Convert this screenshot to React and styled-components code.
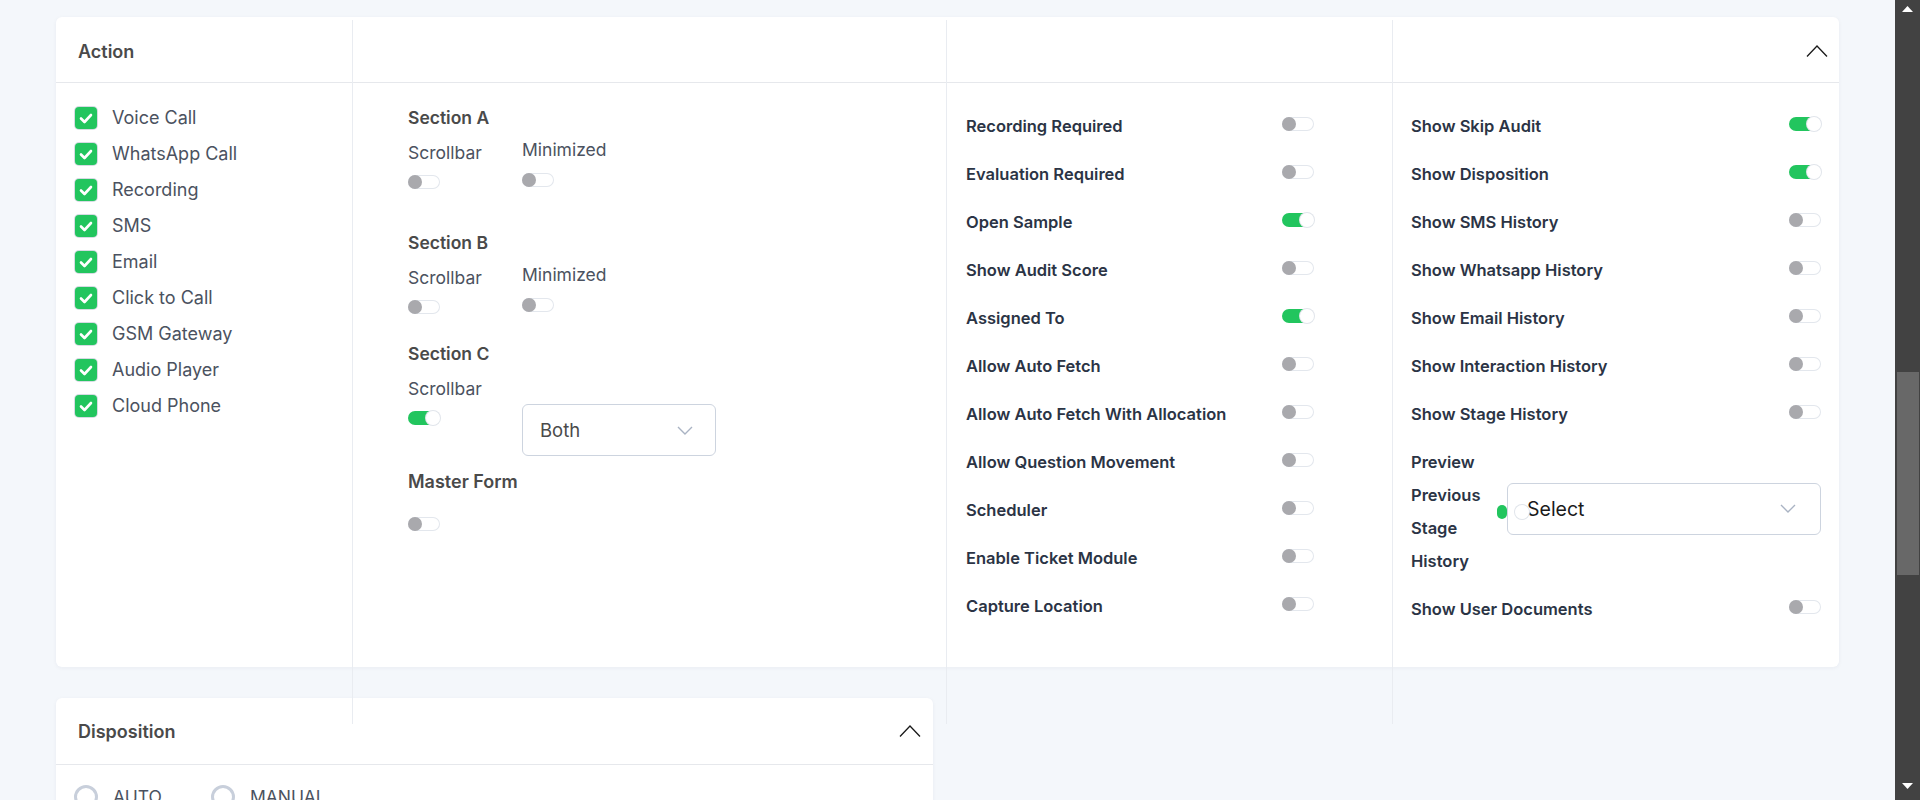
import React from "react";
import styled, { createGlobalStyle } from "styled-components";

const GlobalStyle = createGlobalStyle`
  html, body {
    margin: 0;
    padding: 0;
    background: #f4f7fb;
    font-family: Inter, "Noto Sans", Arial, sans-serif;
  }
  * {
    box-sizing: border-box;
  }
`;

const Page = styled.div`
  padding: 17px 81px 0 56px;
`;

/* browser scroll rail drawn over the right edge */
const ScrollRail = styled.div`
  position: fixed;
  top: 0;
  right: 0;
  width: 25px;
  height: 100vh;
  background: #424242;
  display: flex;
  flex-direction: column;
  justify-content: space-between;
  align-items: center;
  padding: 6px 0 11px;
`;

const ScrollThumb = styled.div`
  position: absolute;
  top: 372px;
  left: 2px;
  right: 1px;
  height: 203px;
  background: #686868;
`;

const Card = styled.section`
  background: #fff;
  border-radius: 6px;
  box-shadow: 0 1px 4px rgba(30, 45, 80, 0.05);
`;

const ActionCard = styled(Card)`
  height: 650px;
  padding-top: 3px;
  display: grid;
  grid-template-columns: 296px 594px 446px minmax(0, 1fr);
`;

const Column = styled.div`
  position: relative;
  height: 704px;
  min-width: 0;
  display: flex;
  flex-direction: column;
  border-left: ${(p) => (p.$divider ? "1px solid #e9ecf1" : "none")};
`;

const ColumnHead = styled.div`
  height: 63px;
  flex: none;
  display: flex;
  align-items: center;
  justify-content: ${(p) => (p.$end ? "flex-end" : "flex-start")};
  padding: 0 11px 0 22px;
  border-bottom: 1px solid #e6e8ec;
`;

const HeadTitle = styled.h2`
  margin: 0;
  font-size: 18px;
  font-weight: 600;
  color: #4a4a4a;
`;

const ColumnBody = styled.div`
  padding: ${(p) => p.$pad};
  display: flex;
  flex-direction: column;
`;

/* ---------- checkboxes ---------- */

const CheckList = styled.div`
  display: flex;
  flex-direction: column;
  gap: 14px;
`;

const CheckRow = styled.label`
  display: flex;
  align-items: center;
  height: 22px;
`;

const CheckBox = styled.span`
  width: 22px;
  height: 22px;
  flex: none;
  border-radius: 4px;
  background: #22c55e;
  box-shadow: 0 0 0 1px #d6dbe3;
  display: flex;
  align-items: center;
  justify-content: center;
`;

const CheckText = styled.span`
  margin-left: 15px;
  font-size: 18px;
  line-height: 22px;
  color: #4b5260;
`;

/* ---------- toggles ---------- */

const Track = styled.span`
  position: relative;
  display: inline-block;
  width: 32px;
  min-width: 0;
  height: 14px;
  flex: 0 1 auto;
  margin-top: ${(p) => p.$top || 0}px;
  border-radius: 7px;
  background: ${(p) => (p.$on ? "#22c55e" : "#fff")};
  box-shadow: ${(p) => (p.$on ? "none" : "inset 0 0 0 1px #e3e7ed")};
`;

const Knob = styled.span`
  position: absolute;
  top: 0;
  left: ${(p) => (p.$on ? "18px" : "0")};
  width: 14px;
  height: 14px;
  border-radius: 50%;
  background: ${(p) => (p.$on ? "#fff" : "#a9a9ad")};
  box-shadow: ${(p) => (p.$on ? "0 0 0 1px #e1e5eb" : "none")};
`;

function Toggle({ on, top }) {
  return (
    <Track $on={on} $top={top}>
      <Knob $on={on} />
    </Track>
  );
}

/* ---------- dropdowns ---------- */

const Dropdown = styled.div`
  width: ${(p) => p.$w}px;
  height: 52px;
  flex: none;
  margin-top: ${(p) => p.$top || 0}px;
  margin-bottom: ${(p) => p.$bottom || 0}px;
  display: flex;
  align-items: center;
  justify-content: space-between;
  padding: 0 ${(p) => p.$right}px 0 ${(p) => p.$left}px;
  background: #fff;
  border: 1px solid #cdd4df;
  border-radius: 6px;
`;

const DropdownValue = styled.span`
  font-size: ${(p) => (p.$dark ? "19.5px" : "18.5px")};
  color: ${(p) => (p.$dark ? "#1b1b1b" : "#4a4a4a")};
`;

const ChevronDown = () => (
  <svg width="16" height="9" viewBox="0 0 16 9" fill="none">
    <polyline points="1,1 8,8 15,1" stroke="#a9b3c3" strokeWidth="1.4" />
  </svg>
);

const ChevronUp = () => (
  <svg width="22" height="12" viewBox="0 0 22 12" fill="none">
    <polyline points="1,11.5 11,1 21,11.5" stroke="#1a1a1a" strokeWidth="1.3" />
  </svg>
);

const RailArrow = ({ down }) => (
  <svg width="11" height="6" viewBox="0 0 11 6">
    <polygon points={down ? "0,0 11,0 5.5,6" : "0,6 11,6 5.5,0"} fill="#fff" />
  </svg>
);

/* ---------- section blocks (column 2) ---------- */

const Section = styled.div`
  margin-bottom: ${(p) => p.$mb || 0}px;
`;

const SectionTitle = styled.h3`
  margin: 0;
  font-size: ${(p) => (p.$big ? "18px" : "17.5px")};
  line-height: 24px;
  font-weight: 600;
  color: #4a4a4a;
`;

const SubRow = styled.div`
  display: flex;
  align-items: flex-start;
  margin-top: 7px;
`;

const SubItem = styled.div`
  width: ${(p) => (p.$w ? `${p.$w}px` : "auto")};
  flex: none;
  display: flex;
  flex-direction: column;
  align-items: flex-start;
  padding-top: ${(p) => p.$shift || 0}px;
`;

const SubLabel = styled.span`
  font-size: 17.5px;
  line-height: 24px;
  color: #4b5260;
`;

/* ---------- setting rows (columns 3, 4) ---------- */

const SettingRow = styled.div`
  display: flex;
  align-items: ${(p) => (p.$center ? "center" : "flex-start")};
  justify-content: space-between;
  padding: ${(p) => (p.$tall ? "7.5px 0" : "12px 0")};
`;

const SettingLabel = styled.span`
  font-size: 16.5px;
  line-height: ${(p) => (p.$narrow ? "33px" : "24px")};
  font-weight: 600;
  color: #2b3445;
  ${(p) => p.$narrow && "flex: 0 0 78px; margin-right: 8px;"}
`;

/* ---------- disposition ---------- */

const LowerGrid = styled.div`
  display: grid;
  grid-template-columns: 1fr 1fr;
  gap: 30px;
  margin-top: 31px;
`;

const DispositionCard = styled(Card)`
  min-height: 320px;
`;

const CardHead = styled.div`
  height: 67px;
  display: flex;
  align-items: center;
  justify-content: space-between;
  padding: 0 12px 0 22px;
  border-bottom: 1px solid #e6e8ec;
`;

const RadioGroup = styled.div`
  display: flex;
  gap: 49px;
  padding: 20px 18px;
`;

const RadioOption = styled.label`
  display: flex;
  align-items: center;
  gap: 15px;
`;

const RadioRing = styled.span`
  width: 24px;
  height: 24px;
  border-radius: 50%;
  border: 3px solid #c8cfdb;
`;

const RadioText = styled.span`
  font-size: 17.5px;
  line-height: 24px;
  color: #4b5260;
`;

const actions = [
  "Voice Call",
  "WhatsApp Call",
  "Recording",
  "SMS",
  "Email",
  "Click to Call",
  "GSM Gateway",
  "Audio Player",
  "Cloud Phone",
];

const auditSettings = [
  ["Recording Required", false],
  ["Evaluation Required", false],
  ["Open Sample", true],
  ["Show Audit Score", false],
  ["Assigned To", true],
  ["Allow Auto Fetch", false],
  ["Allow Auto Fetch With Allocation", false],
  ["Allow Question Movement", false],
  ["Scheduler", false],
  ["Enable Ticket Module", false],
  ["Capture Location", false],
];

const historySettings = [
  ["Show Skip Audit", true],
  ["Show Disposition", true],
  ["Show SMS History", false],
  ["Show Whatsapp History", false],
  ["Show Email History", false],
  ["Show Interaction History", false],
  ["Show Stage History", false],
];

function App() {
  return (
    <>
      <GlobalStyle />
      <Page>
        <ActionCard>
          <Column>
            <ColumnHead>
              <HeadTitle>Action</HeadTitle>
            </ColumnHead>
            <ColumnBody $pad="24px 0 0 19px">
              <CheckList>
                {actions.map((a) => (
                  <CheckRow key={a}>
                    <CheckBox>
                      <svg width="14" height="11" viewBox="0 0 14 11" fill="none">
                        <polyline
                          points="2,5.5 5.5,9 12,2"
                          stroke="#fff"
                          strokeWidth="2.6"
                          strokeLinecap="round"
                          strokeLinejoin="round"
                        />
                      </svg>
                    </CheckBox>
                    <CheckText>{a}</CheckText>
                  </CheckRow>
                ))}
              </CheckList>
            </ColumnBody>
          </Column>

          <Column $divider>
            <ColumnHead />
            <ColumnBody $pad="23px 0 0 55px">
              <Section $mb={42}>
                <SectionTitle>Section A</SectionTitle>
                <SubRow>
                  <SubItem $w={114} $shift={4}>
                    <SubLabel>Scrollbar</SubLabel>
                    <Toggle top={10} />
                  </SubItem>
                  <SubItem $shift={1}>
                    <SubLabel>Minimized</SubLabel>
                    <Toggle top={11} />
                  </SubItem>
                </SubRow>
              </Section>
              <Section $mb={28}>
                <SectionTitle>Section B</SectionTitle>
                <SubRow>
                  <SubItem $w={114} $shift={4}>
                    <SubLabel>Scrollbar</SubLabel>
                    <Toggle top={10} />
                  </SubItem>
                  <SubItem $shift={1}>
                    <SubLabel>Minimized</SubLabel>
                    <Toggle top={11} />
                  </SubItem>
                </SubRow>
              </Section>
              <Section $mb={14}>
                <SectionTitle>Section C</SectionTitle>
                <SubRow>
                  <SubItem $w={114} $shift={4}>
                    <SubLabel>Scrollbar</SubLabel>
                    <Toggle on top={10} />
                  </SubItem>
                  <Dropdown $w={194} $top={31} $left={17} $right={22}>
                    <DropdownValue>Both</DropdownValue>
                    <ChevronDown />
                  </Dropdown>
                </SubRow>
              </Section>
              <Section>
                <SectionTitle $big>Master Form</SectionTitle>
                <Toggle top={23} />
              </Section>
            </ColumnBody>
          </Column>

          <Column $divider>
            <ColumnHead />
            <ColumnBody $pad="19px 78px 0 19px">
              {auditSettings.map(([label, on]) => (
                <SettingRow key={label}>
                  <SettingLabel>{label}</SettingLabel>
                  <Toggle on={on} top={3} />
                </SettingRow>
              ))}
            </ColumnBody>
          </Column>

          <Column $divider>
            <ColumnHead $end>
              <ChevronUp />
            </ColumnHead>
            <ColumnBody $pad="19px 18px 0 18px">
              {historySettings.map(([label, on]) => (
                <SettingRow key={label}>
                  <SettingLabel>{label}</SettingLabel>
                  <Toggle on={on} top={3} />
                </SettingRow>
              ))}
              <SettingRow $tall $center>
                <SettingLabel $narrow>Preview Previous Stage History</SettingLabel>
                <Toggle on />
                <Dropdown $w={314} $left={19} $right={24} $bottom={6}>
                  <DropdownValue $dark>Select</DropdownValue>
                  <ChevronDown />
                </Dropdown>
              </SettingRow>
              <SettingRow>
                <SettingLabel>Show User Documents</SettingLabel>
                <Toggle top={3} />
              </SettingRow>
            </ColumnBody>
          </Column>
        </ActionCard>

        <LowerGrid>
          <DispositionCard>
            <CardHead>
              <HeadTitle>Disposition</HeadTitle>
              <ChevronUp />
            </CardHead>
            <RadioGroup>
              <RadioOption>
                <RadioRing />
                <RadioText>AUTO</RadioText>
              </RadioOption>
              <RadioOption>
                <RadioRing />
                <RadioText>MANUAL</RadioText>
              </RadioOption>
            </RadioGroup>
          </DispositionCard>
        </LowerGrid>
      </Page>

      <ScrollRail>
        <RailArrow />
        <ScrollThumb />
        <RailArrow down />
      </ScrollRail>
    </>
  );
}

export default App;
